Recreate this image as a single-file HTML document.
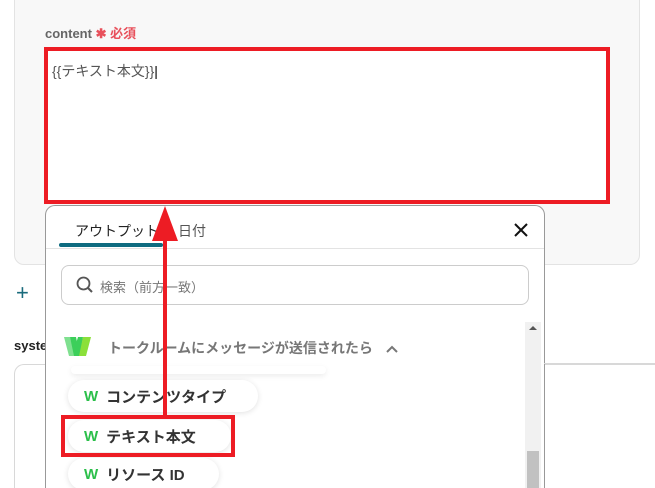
<!DOCTYPE html>
<html style="width:655px;height:488px;overflow:hidden"><head><meta charset="utf-8"><style>
*{box-sizing:border-box;margin:0;padding:0}
body{width:655px;height:488px;overflow:hidden;background:#fff;position:relative;font-family:"Liberation Sans","Noto Sans CJK JP",sans-serif}
.abs{position:absolute}
.panel{left:14px;top:-10px;width:626px;height:275px;background:#f8f8f8;border:1px solid #e3e3e3;border-radius:0 0 10px 10px}
.lbl{left:45px;top:23px;font-size:13px;font-weight:bold;color:#666}
.lbl span{color:#e8505b}
.ta{left:44px;top:47px;width:566px;height:157px;background:#fff;border:4px solid #ed1c24}
.ta div{position:absolute;left:4px;top:10px;font-size:14px;color:#555}
.dd{left:45px;top:205px;width:500px;height:283px;background:#fff;border:1px solid #999;border-bottom:0;border-radius:10px 10px 0 0;overflow:hidden}
.pill{background:#fff;border-radius:16px;box-shadow:0 1px 6px rgba(0,0,0,.12);height:32px;font-size:15px;font-weight:bold;color:#333;display:flex;align-items:center;padding-left:16px}
.pill b{color:#2bbf4a;font-size:15px;margin-right:8px;font-weight:900}
</style></head><body>
<div class="abs panel"></div>
<div class="abs lbl">content <span>✱ 必須</span></div>
<div class="abs ta"><div>{{テキスト本文}}<span style="color:#000">|</span></div></div>
<div class="abs" style="left:16px;top:280px;font-size:22px;color:#1a6b7c">+</div>
<div class="abs" style="left:14px;top:338px;font-size:13px;font-weight:bold;color:#222">syste</div>
<div class="abs" style="left:14px;top:364px;width:700px;height:124px;border:1px solid #d8d8d8;border-bottom:0;border-radius:10px 0 0 0"></div>
<div class="abs dd">
 <div class="abs" style="left:29px;top:15px;font-size:14px;color:#222">アウトプット</div>
 <div class="abs" style="left:132px;top:15px;font-size:14px;color:#555">日付</div>
 <div class="abs" style="left:13px;top:37px;width:104px;height:4px;background:#0e6b80;border-radius:2px"></div>
 <div class="abs" style="left:0;top:42px;width:498px;height:1px;background:#e3e3e3"></div>
 <svg class="abs" style="left:467px;top:16px" width="16" height="16"><path d="M2 2L14 14M14 2L2 14" stroke="#111" stroke-width="2"/></svg>
 <div class="abs" style="left:15px;top:59px;width:468px;height:40px;border:1px solid #ccc;border-radius:8px"></div>
 <svg class="abs" style="left:30px;top:70px" width="18" height="18"><circle cx="7.5" cy="7.5" r="6" fill="none" stroke="#555" stroke-width="1.8"/><path d="M12 12L16 16" stroke="#555" stroke-width="2"/></svg>
 <div class="abs" style="left:54px;top:71px;font-size:13px;color:#777">検索（前方一致）</div>
 <div class="abs" style="left:479px;top:116px;width:16px;height:190px;background:#f1f1f1"></div>
 <div class="abs" style="left:481px;top:245px;width:12px;height:60px;background:#c1c1c1"></div>
 <div class="abs" style="left:483px;top:120px;width:0;height:0;border:4px solid transparent;border-bottom:4px solid #555;border-top:0"></div>
 <svg class="abs" style="left:17px;top:129px" width="30" height="24"><path d="M1 2H7L12 21H6Z" fill="#7fe08f"/><path d="M7 2H13L17 21H11Z" fill="#3ccf5a"/><path d="M12 12L15 2H20L17 21Z" fill="#3ccf5a"/><path d="M20 2H28L23 21H16Z" fill="#8be03a"/></svg>
 <div class="abs" style="left:62px;top:132px;font-size:14px;font-weight:bold;color:#777">トークルームにメッセージが送信されたら</div>
 <svg class="abs" style="left:340px;top:139px" width="12" height="8"><path d="M1 7L6 2L11 7" fill="none" stroke="#777" stroke-width="2"/></svg>
 <div class="abs" style="left:25px;top:160px;width:255px;height:8px;box-shadow:0 2px 6px rgba(0,0,0,.08);border-radius:8px"></div>
 <div class="abs pill" style="left:22px;top:174px;width:190px"><b>W</b>コンテンツタイプ</div>
 <div class="abs pill" style="left:22px;top:214px;width:163px"><b>W</b>テキスト本文</div>
 <div class="abs pill" style="left:22px;top:252px;width:151px"><b>W</b>リソース ID</div>
</div>
<div class="abs" style="left:544px;top:363px;width:111px;height:1px;background:#d8d8d8"></div>
<div class="abs" style="left:61px;top:415px;width:174px;height:42px;border:4px solid #ed1c24"></div>
<div class="abs" style="left:163px;top:238px;width:4px;height:180px;background:#ed1c24"></div>
<svg class="abs" style="left:151px;top:206px" width="28" height="36"><path d="M14 0L27 35H1Z" fill="#ed1c24"/></svg>
</body></html>
